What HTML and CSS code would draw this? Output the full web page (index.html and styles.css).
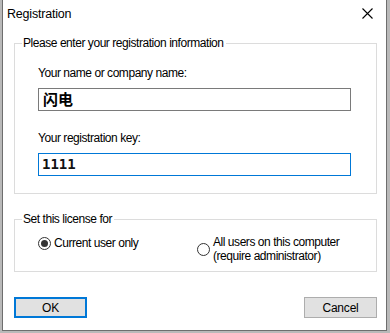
FILE: index.html
```html
<!DOCTYPE html>
<html lang="en">
<head>
  <meta charset="UTF-8" />
  <title>Registration</title>
  <link rel="stylesheet" href="styles.css">
</head>
<body>
  <div class="window">
    <div class="titlebar">
      <span class="title">Registration</span>
      <svg class="close" width="11" height="11" viewBox="0 0 11 11">
        <path d="M0.5 0.5 L10.5 10.5 M10.5 0.5 L0.5 10.5" stroke="#000" stroke-width="1.1" fill="none"/>
      </svg>
    </div>

    <fieldset class="group info">
      <legend>Please enter your registration information</legend>
      <label class="field-label">Your name or company name:</label>
      <div class="textbox">闪电</div>
      <label class="field-label second">Your registration key:</label>
      <div class="textbox key focused">1111</div>
    </fieldset>

    <fieldset class="group license">
      <legend>Set this license for</legend>
      <div class="options">
        <div class="option first">
          <span class="radio checked"></span>
          <span>Current user only</span>
        </div>
        <div class="option">
          <span class="radio"></span>
          <span>All users on this computer<br>(require administrator)</span>
        </div>
      </div>
    </fieldset>

    <div class="buttons">
      <button class="btn default">OK</button>
      <button class="btn">Cancel</button>
    </div>
  </div>
</body>
</html>
```

FILE: styles.css
```css
* {
  box-sizing: border-box;
  margin: 0;
  padding: 0;
}

body {
  background-color: #b9b9b9;
  font-family: "Liberation Sans", Arial, sans-serif;
  font-size: 12px;
  letter-spacing: -0.45px;
  color: #000;
}

/* Dialog window */
.window {
  margin-left: 2px;
  width: 385px;
  height: 331px;
  background: #fff;
  border: 1px solid #6e6e6e;
  border-top: none;
}

.titlebar {
  height: 30px;
  display: flex;
  align-items: center;
  justify-content: space-between;
  padding: 0 13px 0 4px;
}

.title {
  font-size: 12.5px;
  letter-spacing: -0.2px;
  margin-top: -3px;
}

.close {
  margin-top: -4px;
}

/* Group boxes */
.group {
  margin: 6px 0 0 11px;
  width: 363px;
  border: 1px solid #dcdcdc;
  padding: 0 0 0 23px;
}

.group legend {
  margin-left: -16px;
  padding: 0 2px 0 1px;
  line-height: 14px;
}

.info {
  height: 158px;
}

.field-label {
  display: block;
  margin-top: 15px;
  line-height: 16px;
}

.field-label.second {
  margin-top: 19px;
}

.textbox {
  margin-top: 7px;
  width: 313px;
  height: 23px;
  border: 1px solid #7a7a7a;
  padding-left: 4px;
  font-family: "Noto Sans CJK SC", sans-serif;
  font-weight: bold;
  font-size: 15px;
  letter-spacing: 0;
  line-height: 20px;
}

.textbox.key {
  font-family: "DejaVu Sans Mono", monospace;
  font-size: 14px;
  color: #111;
  padding-left: 3px;
}

.textbox.focused {
  border-color: #0078d7;
}

.license {
  margin-top: 18px;
  height: 60px;
}

.options {
  display: flex;
  align-items: flex-start;
  margin-top: 9px;
}

.option {
  display: flex;
  align-items: center;
  gap: 3px;
  line-height: 14px;
}

.option.first {
  width: 159px;
  margin-top: 1px;
}

.radio {
  width: 13px;
  height: 13px;
  border: 1px solid #333;
  border-radius: 50%;
  display: flex;
  align-items: center;
  justify-content: center;
  flex-shrink: 0;
}

.radio.checked::after {
  content: "";
  width: 7px;
  height: 7px;
  border-radius: 50%;
  background: #333;
}

/* Buttons */
.buttons {
  display: flex;
  justify-content: space-between;
  margin: 25px 9px 0 11px;
}

.btn {
  width: 73px;
  height: 21px;
  background: #e1e1e1;
  border: 1px solid #adadad;
  font-family: inherit;
  font-size: 12px;
  letter-spacing: -0.2px;
  color: #000;
}

.btn.default {
  border: 2px solid #0078d7;
}
```
